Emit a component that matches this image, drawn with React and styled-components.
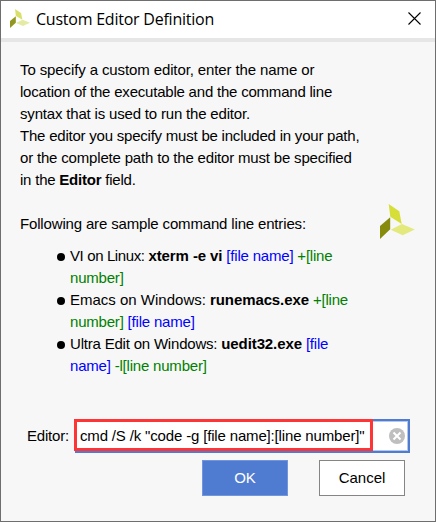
import React from "react";
import styled, { createGlobalStyle } from "styled-components";

const GlobalStyle = createGlobalStyle`
  *, *::before, *::after { box-sizing: border-box; }
  body { margin: 0; background: #f7f7f7; }
`;

const Dialog = styled.main`
  display: flex;
  flex-direction: column;
  width: 436px;
  height: 522px;
  border: 1px solid #6e6e6e;
  background: #f7f7f7;
  color: #000;
  font: 15px/22px "Liberation Sans", Arial, sans-serif;
  white-space: nowrap;
`;

const TitleBar = styled.header`
  display: flex;
  align-items: center;
  height: 41px;
  flex: none;
  padding: 0 14px 2px 9px;
  background: #fff;
  border-bottom: 4px solid #e6e6e6;
`;

const Title = styled.h1`
  flex: 1;
  margin: 0 0 0 6px;
  font: 400 16px/24px "Open Sans", sans-serif;
  letter-spacing: -0.23px;
`;

const CloseButton = styled.button`
  display: flex;
  padding: 0;
  border: 0;
  background: none;
`;

const Content = styled.section`
  display: flex;
  justify-content: space-between;
  height: 377px;
  flex: none;
  padding: 17px 20px 0 19px;
`;

const Copy = styled.div`
  flex: none;
`;

const Text = styled.span`
  letter-spacing: ${(p) => p.$spacing || 0}px;
`;

const Line = styled.div`
  height: 22px;
  letter-spacing: ${(p) => p.$spacing ?? -0.2}px;
`;

const Intro = styled.div`
  margin-bottom: 22px;
`;

const Samples = styled.ul`
  margin: 10px 0 0;
  padding: 0 0 0 37px;
  list-style: none;
`;

const Sample = styled.li`
  display: flex;
  gap: 5px;
`;

const Bullet = styled.span`
  width: 8px;
  height: 8px;
  margin-top: 8px;
  border-radius: 50%;
  background: #000;
`;

const Command = styled.b`
  letter-spacing: -0.1px;
`;

const FileArg = styled.span`
  color: #0000ff;
`;

const LineArg = styled.span`
  color: #008000;
`;

const LogoSlot = styled.div`
  margin-top: 145px;
`;

const Field = styled.label`
  display: flex;
  align-items: center;
  height: 34px;
  flex: none;
  padding: 0 25px 0 26px;
`;

const FieldName = styled.span`
  width: 48px;
  flex: none;
  letter-spacing: -0.2px;
`;

const InputBox = styled.span`
  position: relative;
  display: flex;
  align-items: center;
  justify-content: space-between;
  flex: none;
  width: 335px;
  height: 34px;
  padding: 0 3px;
  border: 2px solid #4f7bd1;
  box-shadow: inset -1px -1px #b6c8ea, inset 0 1px #b6c8ea;
  background: #fff;
`;

const Highlight = styled.span`
  position: absolute;
  left: -3px;
  top: -2px;
  width: 299px;
  height: 32px;
  border: 3px solid #ff3434;
`;

const Actions = styled.footer`
  display: flex;
  justify-content: flex-end;
  gap: 31px;
  padding: 7px 30px 0 0;
`;

const Button = styled.button`
  width: 86px;
  height: 36px;
  padding: 0;
  border: 1px solid ${(p) => (p.$primary ? "#7196de" : "#858585")};
  background: ${(p) => (p.$primary ? "#4f7bd1" : "#fff")};
  color: ${(p) => (p.$primary ? "#fff" : "#000")};
  font: inherit;
`;

const Logo = ({ width, height, soft }) => (
  <svg width={width} height={height} viewBox="0 0 35 35" preserveAspectRatio="none" aria-hidden="true">
    <path d="M8.7 0 19.3 7.3 21.7 20 10.3 12.7Z" fill={soft ? "#d9e06a" : "#d6df3a"} />
    <path d="M10.2 13.3V25.3L0 35V22Z" fill={soft ? "#92981f" : "#878b0c"} />
    <path d="M10.7 25.7 22 20 34.8 25.4 22.7 31.3Z" fill={soft ? "#e5eaa5" : "#e3e97d"} />
  </svg>
);

export default function App() {
  return (
    <>
      <GlobalStyle />
      <Dialog>
        <TitleBar>
          <Logo width={20} height={19} soft />
          <Title>Custom Editor Definition</Title>
          <CloseButton aria-label="Close">
            <svg width="13" height="13" viewBox="0 0 13 13">
              <path d="M.5.5 12.5 12.5M12.5.5.5 12.5" stroke="#000" strokeWidth="1.1" />
            </svg>
          </CloseButton>
        </TitleBar>
        <Content>
          <Copy>
            <Intro>
              <Line $spacing={-0.11}>To specify a custom editor, enter the name or</Line>
              <Line $spacing={-0.21}>location of the executable and the command line</Line>
              <Line $spacing={-0.18}>syntax that is used to run the editor.</Line>
              <Line $spacing={-0.22}>The editor you specify must be included in your path,</Line>
              <Line $spacing={-0.18}>or the complete path to the editor must be specified</Line>
              <Line $spacing={-0.22}>in the <b>Editor</b> field.</Line>
            </Intro>
            <Line $spacing={-0.16}>Following are sample command line entries:</Line>
            <Samples>
              <Sample>
                <Bullet />
                <div>
                  <Line><Text $spacing={-0.38}>VI on Linux: </Text><Command>xterm -e vi</Command> <FileArg>[file name]</FileArg> <LineArg>+[line</LineArg></Line>
                  <Line><LineArg>number]</LineArg></Line>
                </div>
              </Sample>
              <Sample>
                <Bullet />
                <div>
                  <Line><Text>Emacs on Windows: </Text><Command>runemacs.exe</Command> <LineArg>+[line</LineArg></Line>
                  <Line><LineArg>number]</LineArg> <FileArg>[file name]</FileArg></Line>
                </div>
              </Sample>
              <Sample>
                <Bullet />
                <div>
                  <Line>Ultra Edit on Windows: <Command>uedit32.exe</Command> <FileArg>[file</FileArg></Line>
                  <Line><FileArg>name]</FileArg> <LineArg>-l[line number]</LineArg></Line>
                </div>
              </Sample>
            </Samples>
          </Copy>
          <LogoSlot>
            <Logo width={35} height={35} />
          </LogoSlot>
        </Content>
        <Field>
          <FieldName>Editor:</FieldName>
          <InputBox>
            <Text $spacing={-0.16}>cmd /S /k "code -g [file name]:[line number]"</Text>
            <svg width="16" height="16" viewBox="0 0 16 16" aria-hidden="true">
              <circle cx="8" cy="8" r="8" fill="#bfbfbf" />
              <path d="M4.5 4.5 11.5 11.5M11.5 4.5 4.5 11.5" stroke="#fff" strokeWidth="2" />
            </svg>
            <Highlight />
          </InputBox>
        </Field>
        <Actions>
          <Button $primary>OK</Button>
          <Button>Cancel</Button>
        </Actions>
      </Dialog>
    </>
  );
}
